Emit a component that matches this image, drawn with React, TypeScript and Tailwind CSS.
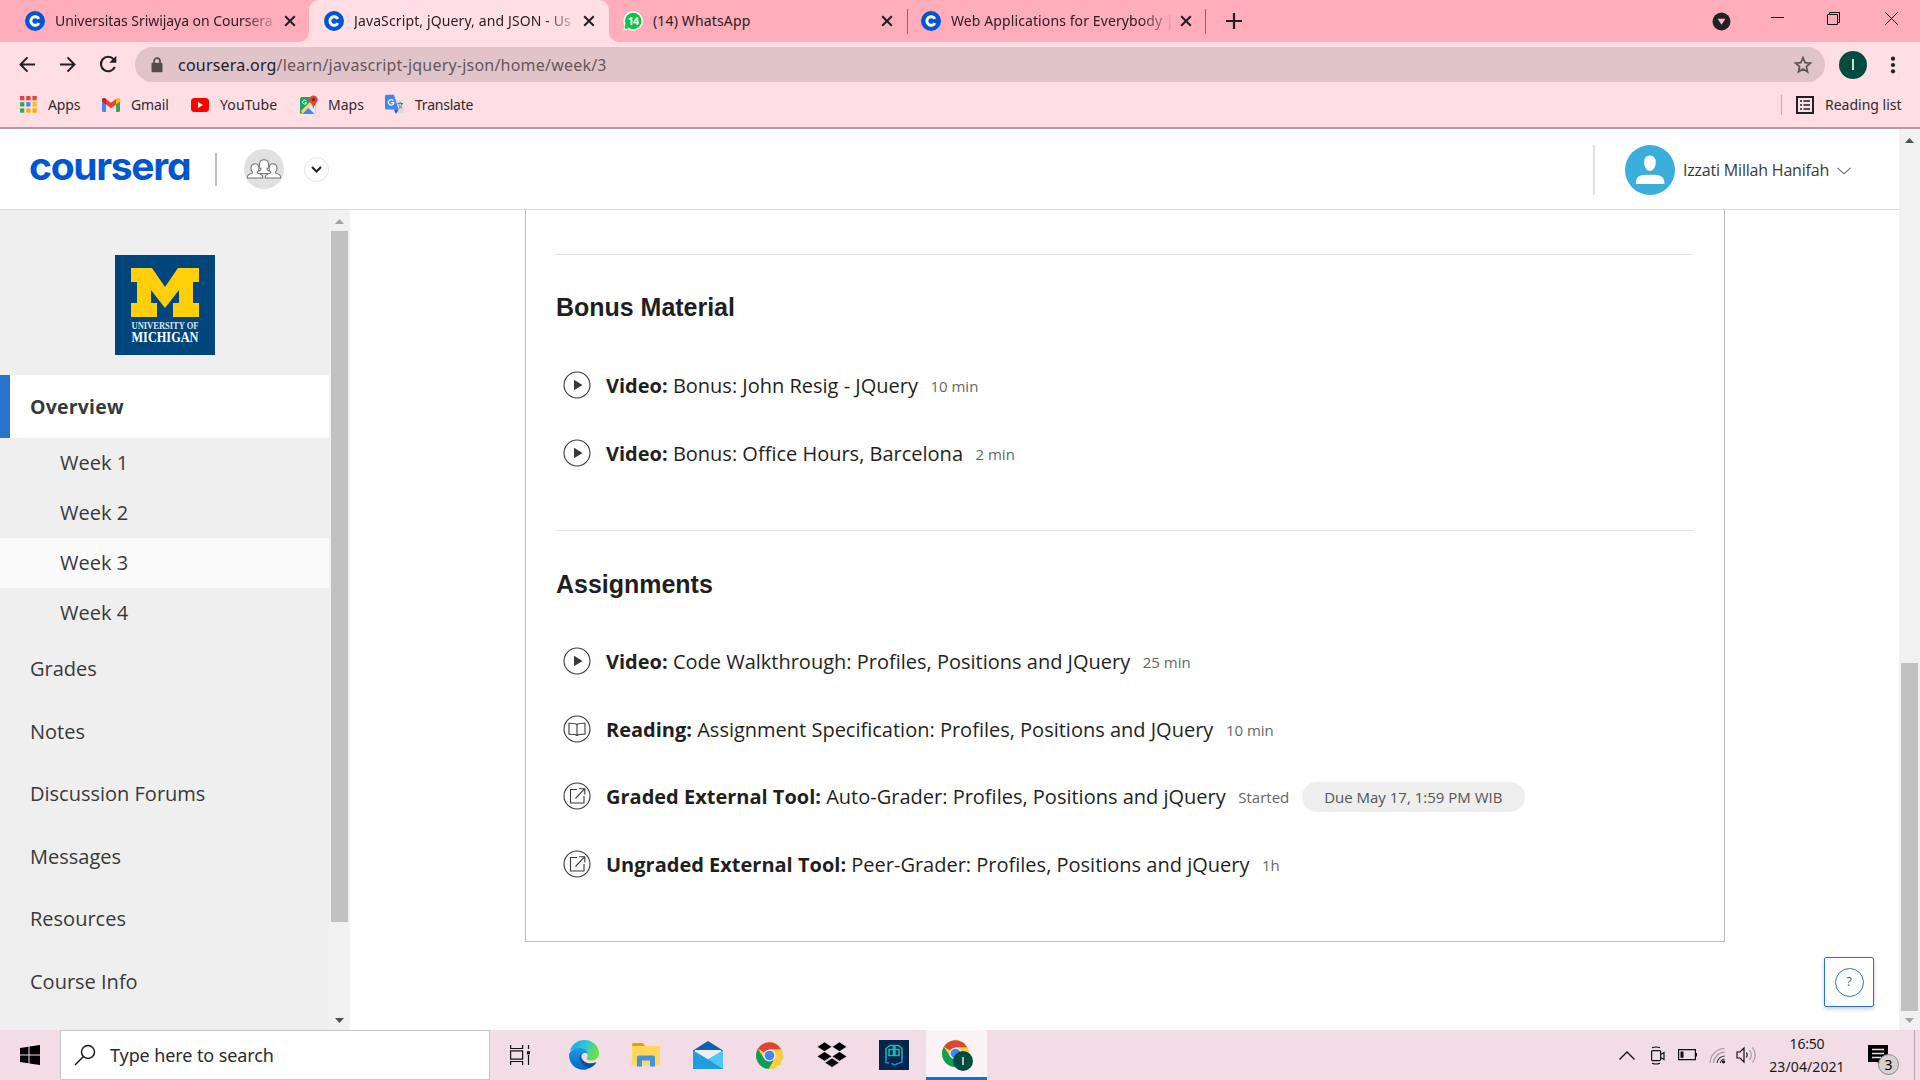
import React from "react";

const ui = "font-['Noto_Sans',sans-serif]";
const os = "font-['Open_Sans',sans-serif]";

function CourseraIcon() {
  return (
    <svg width="20" height="20" viewBox="0 0 20 20" className="shrink-0">
      <circle cx="10" cy="10" r="10" fill="#0056d2" />
      <path d="M13.9 12.1a4.3 4.3 0 1 1 0-4.2" fill="none" stroke="#fff" strokeWidth="2.9" />
    </svg>
  );
}

function WhatsAppIcon() {
  return (
    <svg width="20" height="20" viewBox="0 0 20 20" className="shrink-0">
      <path d="M10.3.3a9.5 9.7 0 1 1-5 17.9L.4 19.8l1.2-5A9.6 9.7 0 0 1 10.3.3z" fill="#fff" />
      <circle cx="10.2" cy="10" r="8.2" fill="#0cc143" />
      <path d="M2.4 12.6l-.8 5.6 4-1.2z" fill="#0cc143" />
      <text x="10.1" y="13.8" fontSize="10.5" fontWeight="700" fill="#fff" textAnchor="middle" fontFamily="Open Sans" letterSpacing="-.6">14</text>
    </svg>
  );
}

function X() {
  return (
    <svg width="12" height="12" viewBox="0 0 12 12" className="shrink-0">
      <path d="M1.2 1.2l9.6 9.6M10.8 1.2L1.2 10.8" stroke="#1d1f22" strokeWidth="2" />
    </svg>
  );
}

function Tab({ icon, title, text, track, fade }: { icon: React.ReactNode; title: string; text: string; track: string; fade?: boolean }) {
  return (
    <div className={"flex h-[41px] items-center " + text}>
      {icon}
      <div className={"ml-[10px] flex-1 overflow-hidden whitespace-nowrap text-[14px] text-[#2b2024] " + ui + " " + track + (fade ? " [mask-image:linear-gradient(to_right,#000_86%,rgba(0,0,0,.15))]" : "")}>
        {title}
      </div>
      <X />
    </div>
  );
}

function TabStrip() {
  return (
    <div className="flex h-[42px] bg-[#ffacbb]">
      <Tab icon={<CourseraIcon />} title="Universitas Sriwijaya on Coursera" text="w-[309px] pl-[25px] pr-[13px] [&>svg:last-child]:ml-[9px]" track="tracking-[-0.05px]" fade />
      <div className="relative w-[300px]">
        <div className="h-[42px] rounded-t-[10px] bg-[#ffdee4]">
          <Tab icon={<CourseraIcon />} title="JavaScript, jQuery, and JSON - Us" text="w-[300px] pl-[15px] pr-[14px] [&>svg:last-child]:ml-[8px]" track="tracking-[0.12px]" fade />
        </div>
        <svg className="absolute bottom-0 left-[-10px]" width="10" height="10"><path d="M0 10A10 10 0 0 0 10 0V10z" fill="#ffdee4" /></svg>
        <svg className="absolute bottom-0 right-[-10px]" width="10" height="10"><path d="M10 10A10 10 0 0 1 0 0V10z" fill="#ffdee4" /></svg>
      </div>
      <Tab icon={<WhatsAppIcon />} title="(14) WhatsApp" text="w-[298px] pl-[14px] pr-[14px]" track="tracking-[0.15px]" />
      <div className="mt-[9px] h-[25px] w-px bg-[#96646e]" />
      <Tab icon={<CourseraIcon />} title="Web Applications for Everybody |" text="w-[297px] pl-[13px] pr-[13px] [&>svg:last-child]:ml-[9px]" track="tracking-[0.1px]" fade />
      <div className="mt-[9px] h-[25px] w-px bg-[#96646e]" />
      <svg className="ml-[20px] mt-[13px]" width="16" height="16"><path d="M8 0v16M0 8h16" stroke="#1d1f22" strokeWidth="2.2" /></svg>
      <div className="flex-1" />
      <svg className="mr-[40px] mt-[12px]" width="19" height="19"><circle cx="9.5" cy="9.5" r="9" fill="#202124" /><path d="M5.6 6.8h7.8l-3.9 6z" fill="#ffb9c5" /></svg>
      <svg className="mr-[43px] mt-[12px]" width="13" height="13"><path d="M0 5.5h13" stroke="#111" /></svg>
      <svg className="mr-[45px] mt-[12px]" width="13" height="13"><path d="M.5 2.5h10v10H.5zM2.5 2.5v-2h10v10h-2" fill="none" stroke="#111" /></svg>
      <svg className="mr-[22px] mt-[12px]" width="13" height="13"><path d="M.3.3l12.4 12.4M12.7.3L.3 12.7" stroke="#111" /></svg>
    </div>
  );
}

function Toolbar() {
  return (
    <div className="flex h-[45px] items-center bg-[#ffdee4]">
      <svg className="ml-[19px]" width="17" height="17" viewBox="0 0 18 18"><path d="M17 9H2M9 1.5L1.6 9 9 16.5" fill="none" stroke="#202124" strokeWidth="2.1" /></svg>
      <svg className="ml-[23px]" width="17" height="17" viewBox="0 0 18 18"><path d="M1 9h15M9 1.5L16.4 9 9 16.5" fill="none" stroke="#202124" strokeWidth="2.1" /></svg>
      <svg className="ml-[23px]" width="19" height="19" viewBox="0 0 20 20"><path d="M16.6 12.6a7.6 7.6 0 1 1-1.2-8.1L17 6.2" fill="none" stroke="#202124" strokeWidth="2.2" /><path d="M18.2.8v7.4h-7.4z" fill="#202124" /></svg>
      <div className="ml-[17px] flex h-[35px] w-[1690px] items-center rounded-full bg-[#e1c4ca] pl-[16px] pr-[12px]">
        <svg width="12" height="16" viewBox="0 0 12 16"><path d="M3 6V4.2a3 3 0 0 1 6 0V6" fill="none" stroke="#55494d" strokeWidth="1.7" /><rect x=".5" y="5.7" width="11" height="9.6" rx="1.2" fill="#55494d" /></svg>
        <div className={"ml-[15px] flex-1 whitespace-nowrap text-[16px] text-[#66565b] tracking-[0.21px] " + ui}>
          <span className="text-[#202124]">coursera.org</span>/learn/javascript-jquery-json/home/week/3
        </div>
        <svg width="20" height="20" viewBox="0 0 24 24"><path d="M12 3.2l2.5 6 6.4.5-4.9 4.2 1.5 6.3-5.5-3.4-5.5 3.4L8 13.9 3.1 9.7l6.4-.5z" fill="none" stroke="#5f5559" strokeWidth="2.1" /></svg>
      </div>
      <div className="ml-[14px] flex h-[28px] w-[28px] items-center justify-center rounded-full bg-[#004d40]">
        <div className="h-[11px] w-[1.5px] bg-[#cfe0dc]" />
      </div>
      <svg className="ml-[22px]" width="8" height="18"><circle cx="4" cy="2.7" r="2.1" fill="#202124" /><circle cx="4" cy="9" r="2.1" fill="#202124" /><circle cx="4" cy="15.3" r="2.1" fill="#202124" /></svg>
    </div>
  );
}

function Bookmarks() {
  const dots = ["#ea4335", "#ea4335", "#ea4335", "#34a853", "#4285f4", "#fbbc04", "#34a853", "#fbab04", "#fbab04"];
  const label = "whitespace-nowrap text-[14px] text-[#2f2a2d] " + ui;
  return (
    <div className="flex h-[42px] items-center border-b-2 border-[#b39aa1] bg-[#ffdee4] pb-[5px] pl-[20px]">
      <svg width="17" height="17" viewBox="0 0 17 17">
        {dots.map((c, i) => (<rect key={i} x={(i % 3) * 6.2} y={Math.floor(i / 3) * 6.2} width="4.3" height="4.3" fill={c} />))}
      </svg>
      <div className={"ml-[11px] w-[54px] tracking-[-0.1px] " + label}>Apps</div>
      <svg width="18" height="14" viewBox="0 0 18 14">
        <path d="M0 1.5V12.8A1.2 1.2 0 0 0 1.2 14H4V4z" fill="#4285f4" /><path d="M18 1.5V12.8a1.2 1.2 0 0 1-1.2 1.2H14V4z" fill="#34a853" />
        <path d="M14 .8V6.5L18 3.4V2c0-1.8-1.7-2.5-3-1.7z" fill="#fbbc04" /><path d="M4 .8V6.5L0 3.4V2C0 .2 1.7-.5 3 .3z" fill="#c5221f" /><path d="M4 1v5.5l5 3.8 5-3.8V1L9 4.8z" fill="#ea4335" />
      </svg>
      <div className={"ml-[11px] w-[60px] tracking-[-0.1px] " + label}>Gmail</div>
      <svg width="18" height="14" viewBox="0 0 18 14"><rect width="18" height="14" rx="3.5" fill="#f00" /><path d="M7 4l5 3-5 3z" fill="#fff" /></svg>
      <div className={"ml-[11px] w-[80px] tracking-[0.1px] " + label}>YouTube</div>
      <svg width="18" height="20" viewBox="0 0 18 20">
        <rect x="0" y="2" width="15.5" height="17" rx="1.5" fill="#1fa463" /><path d="M1 19L12 7l3.5 4v8z" fill="#e8eaed" /><path d="M2 19l6-6.5 6.5 6.5z" fill="#4285f4" /><path d="M1 16L12 5l2 2L3 18.5z" fill="#fdd663" />
        <path d="M13.5.4a4.2 4.2 0 0 1 4.2 4.2c0 3.2-3.4 4.4-4.2 9.4-.8-5-4.2-6.2-4.2-9.4A4.2 4.2 0 0 1 13.5.4z" fill="#ea4335" /><circle cx="13.5" cy="4.7" r="1.6" fill="#7b2018" /><path d="M6.3 6a2 2 0 1 0 .3 1.6H4.8" fill="none" stroke="#fff" strokeWidth=".9" />
      </svg>
      <div className={"ml-[10px] w-[57px] tracking-[0px] " + label}>Maps</div>
      <svg width="20" height="21" viewBox="0 0 20 21">
        <rect x="8" y="6" width="10.5" height="13" rx="1" fill="#dadce0" /><path d="M0 2.2A1.5 1.5 0 0 1 1.5.7H9l4.5 14.8H1.5A1.5 1.5 0 0 1 0 14z" fill="#4285f4" /><path d="M9 15.5h4.5L11 20z" fill="#3057c5" />
        <path d="M8.3 6.8a2.7 2.7 0 1 0 .5 1.9H6.2" fill="none" stroke="#fff" strokeWidth="1.3" /><path d="M12.5 9.5h5.5M15.2 8v1.5M17 9.7c-.5 2.3-2 4-3.5 5M13.7 10.5c.7 1.8 2 3 3.5 4" fill="none" stroke="#667985" strokeWidth="1" />
      </svg>
      <div className={"ml-[10px] flex-1 tracking-[-0.22px] " + label}>Translate</div>
      <div className="h-[20px] w-px bg-[#c9aab1]" />
      <svg className="ml-[14px]" width="18" height="18" viewBox="0 0 18 18"><rect x="1" y="1" width="16" height="16" fill="none" stroke="#202124" strokeWidth="2" /><path d="M4 5h2M4 9h2M4 13h2M7.5 5H14M7.5 9H14M7.5 13H14" stroke="#202124" strokeWidth="1.7" /></svg>
      <div className={"ml-[11px] w-[95px] tracking-[0px] " + label}>Reading list</div>
    </div>
  );
}

function Header() {
  return (
    <div className="flex h-[81px] w-[1899px] items-center border-b border-[#dcdcdc] bg-white">
      <div className="mb-[6px] ml-[29px] w-[186px] whitespace-nowrap font-['Inter',sans-serif] text-[39px] font-bold leading-[40px] tracking-[-1.3px] text-[#0056d2] [font-feature-settings:'cv11']">coursera</div>
      <div className="h-[33px] w-[2px] bg-[#bdbdbd]" />
      <div className="ml-[27px] flex h-[40px] w-[40px] items-center justify-center rounded-full bg-[#e1e1e1]">
        <svg width="36" height="20" viewBox="0 0 36 20" fill="#fff" stroke="#757575" strokeWidth="1.1">
          <path d="M10 14.5c.3-2.5 2.500-2.500 4.500-3.200l.5-1.300C12.300 8 12.500.7 18 .7s5.700 7.300 3 9.300l.5 1.300c2 .7 4.200.7 4.500 3.200z" />
          <path d="M1.300 19c0-3 1.400-3.600 4.900-4.700l.4-1.200C4.200 11 4.200 4.800 9 4.800s4.800 6.200 2.400 8.300l.4 1.200c3.500 1.100 4.900 1.700 4.900 4.700z" />
          <path d="M19.300 19c0-3 1.400-3.600 4.900-4.700l.4-1.200c-2.400-2.100-2.400-8.300 2.400-8.300s4.800 6.200 2.400 8.300l.4 1.200c3.500 1.100 4.900 1.700 4.900 4.700z" />
        </svg>
      </div>
      <div className="ml-[20px] mt-px flex h-[25px] w-[25px] items-center justify-center rounded-full border border-[#e1e1e1]">
        <svg width="11" height="7"><path d="M1 1l4.500 4.500L10 1" fill="none" stroke="#1f1f1f" strokeWidth="2" /></svg>
      </div>
      <div className="flex-1" />
      <div className="mt-[2px] h-[50px] w-[2px] bg-[#e1e1e1]" />
      <svg className="ml-[30px] mt-[2px]" width="50" height="50"><circle cx="25" cy="25" r="25" fill="#3caedb" /><path d="M25 10.500c9 0 6.500 15.500 0 15.500s-9-15.500 0-15.500zM10.800 39c0-9 5-9.300 14.200-9.300S39.500 30 39.500 39z" fill="#fff" /></svg>
      <div className={"ml-[8px] mt-[2px] w-[154px] whitespace-nowrap text-[16px] text-[#373a3c] tracking-[-0.2px] " + os}>Izzati Millah Hanifah</div>
      <svg className="mr-[48px] mt-[4px]" width="14" height="8"><path d="M.5.8l6.500 6 6.500-6" fill="none" stroke="#666" strokeWidth="1.100" /></svg>
    </div>
  );
}

function Michigan() {
  return (
    <div className="ml-[115px] mt-[45px] h-[100px] w-[100px] bg-[#00457c]">
      <svg width="100" height="100">
        <path d="M16 13h21l13 19 13-19h21v14h-6v21h6v14H58V48h6V35L50 53 36 35v13h6v14H16V48h6V27h-6z" fill="#ffcf0a" />
        <text x="50" y="74" textAnchor="middle" textLength="67" lengthAdjust="spacingAndGlyphs" fontFamily="Liberation Serif" fontSize="9.5" fontWeight="700" fill="#dfe8ef">UNIVERSITY OF</text>
        <text x="50" y="86.500" textAnchor="middle" textLength="67" lengthAdjust="spacingAndGlyphs" fontFamily="Liberation Serif" fontSize="14.5" fontWeight="700" fill="#fff">MICHIGAN</text>
      </svg>
    </div>
  );
}

function Triangle({ up, dark }: { up?: boolean; dark?: boolean }) {
  return (
    <svg width="9" height="5"><path d={up ? "M0 5h9L4.500 0z" : "M0 0h9L4.500 5z"} fill={dark ? "#505050" : "#a3a3a3"} /></svg>
  );
}

function Sidebar() {
  return (
    <div className={"flex h-[820px] w-[350px] bg-[#efefef] text-[#373a3c] " + os}>
      <div className="w-[329px] overflow-hidden text-[20px]">
        <Michigan />
        <div className="mt-[20px] flex h-[63px] items-center border-l-[10px] border-[#2a73cc] bg-white pl-[20px] text-[19.5px] font-bold tracking-[0.2px]">Overview</div>
        {["Week 1", "Week 2", "Week 3", "Week 4"].map((w) => (
          <div key={w} className={"flex h-[50px] items-center pl-[60px] " + (w === "Week 3" ? "bg-[#fafafa]" : "")}>{w}</div>
        ))}
        {["Grades", "Notes", "Discussion Forums", "Messages", "Resources", "Course Info"].map((w) => (
          <div key={w} className="flex h-[62.5px] items-center pl-[30px]">{w}</div>
        ))}
      </div>
      <div className="flex h-[820px] w-[21px] flex-col items-center bg-[#f1f1f1]">
        <div className="flex h-[21px] items-center pt-[2px]"><Triangle up /></div>
        <div className="h-[691px] w-[17px] bg-[#c1c1c1]" />
        <div className="flex-1" />
        <div className="flex h-[21px] items-center pt-px"><Triangle dark /></div>
      </div>
    </div>
  );
}

function RowIcon({ kind }: { kind: string }) {
  return (
    <svg width="28" height="28" viewBox="0 0 28 28" fill="none" stroke="#373a45" strokeWidth="1.1" className="mb-[2px] shrink-0">
      <circle cx="14" cy="14" r="13" />
      {kind === "video" && <path d="M11 8.700v10.600l8.500-5.300z" fill="#373a45" stroke="none" />}
      {kind === "reading" && <path d="M14 9.600c-1.500-1.300-4-1.500-8-1.400v11c4-.1 6.500 0 8 1.300 1.500-1.300 4-1.400 8-1.300v-11c-4-.1-6.500.1-8 1.400v10.900" />}
      {kind === "tool" && <path d="M14 7.500H7.500v13.500H21v-7M16 6.700h5.800v5.800M21.800 6.700L12.500 16.500" />}
    </svg>
  );
}

function Row({ kind, type, title, meta, due }: { kind: string; type: string; title: string; meta: string; due?: string }) {
  return (
    <div className="flex h-[67.6px] items-center pl-[7px]">
      <RowIcon kind={kind} />
      <div className="ml-[15px] whitespace-nowrap text-[20px] text-[#1f1f1f]">
        <span className="font-bold">{type}:</span> {title}
      </div>
      <div className="ml-[12.5px] text-[15px] text-[#666]">{meta}</div>
      {due && <div className="ml-[12.5px] flex h-[30px] w-[223px] items-center justify-center rounded-full bg-[#eee] text-[15px] text-[#555]">{due}</div>}
    </div>
  );
}

function Heading({ children, offset }: { children: React.ReactNode; offset: string }) {
  return <div className={"flex h-[97.5px] items-center font-['Liberation_Sans',sans-serif] text-[25px] font-bold tracking-[-0.02px] text-[#1f1f1f] " + offset}>{children}</div>;
}

function Main() {
  return (
    <div className={"flex h-[820px] flex-1 bg-white pl-[175px] " + os}>
      <div className="h-[732px] w-[1200px] border border-t-0 border-[#bdbdbd] pl-[30px] pr-[31px] pt-[44px]">
        <div className="h-[276px] border-t border-[#e1e1e1]">
          <Heading offset="pt-[8px]">Bonus Material</Heading>
          <Row kind="video" type="Video" title="Bonus: John Resig - JQuery" meta="10 min" />
          <Row kind="video" type="Video" title="Bonus: Office Hours, Barcelona" meta="2 min" />
        </div>
        <div className="border-t border-[#e1e1e1]">
          <Heading offset="pt-[9.5px]">Assignments</Heading>
          <Row kind="video" type="Video" title="Code Walkthrough: Profiles, Positions and JQuery" meta="25 min" />
          <Row kind="reading" type="Reading" title="Assignment Specification: Profiles, Positions and JQuery" meta="10 min" />
          <Row kind="tool" type="Graded External Tool" title="Auto-Grader: Profiles, Positions and jQuery" meta="Started" due="Due May 17, 1:59 PM WIB" />
          <Row kind="tool" type="Ungraded External Tool" title="Peer-Grader: Profiles, Positions and jQuery" meta="1h" />
        </div>
      </div>
      <div className="ml-[99px] mt-[747px] flex h-[50px] w-[50px] items-center justify-center rounded-[2px] border border-[#2a73cc] shadow-[0_2px_4px_rgba(0,0,0,.2)]">
        <div className="flex h-[29px] w-[29px] items-center justify-center rounded-full border border-[#2a73cc] text-[13px] text-[#2a73cc]">?</div>
      </div>
    </div>
  );
}

function PageScrollbar() {
  return (
    <div className="flex h-[901px] w-[21px] flex-col items-center bg-[#f1f1f1]">
      <div className="flex h-[21px] items-center pt-[2px]"><Triangle up dark /></div>
      <div className="h-[513px]" />
      <div className="h-[348px] w-[17px] bg-[#c1c1c1]" />
      <div className="flex h-[19px] items-center"><Triangle /></div>
    </div>
  );
}

function ChromeLogo({ size }: { size: number }) {
  return (
    <svg width={size} height={size} viewBox="0 0 28 28">
      <circle cx="14" cy="14" r="14" fill="#ffcd40" />
      <path d="M14 14L1.900 7A14 14 0 0 1 26.100 7.700H14z" fill="#db4437" />
      <path d="M1.900 7A14 14 0 0 0 13.300 28L19.500 17.200 8.500 17.200z" fill="#0f9d58" />
      <path d="M14 7.700h12.100A14 14 0 0 1 13.300 28L19.500 17.100z" fill="#ffcd40" />
      <circle cx="14" cy="14" r="6.300" fill="#f1f1f1" /><circle cx="14" cy="14" r="5" fill="#4285f4" />
    </svg>
  );
}

function Taskbar() {
  return (
    <div className={"flex h-[50px] items-stretch bg-[#f2dde6] " + ui}>
      <div className="flex w-[60px] items-center justify-center">
        <svg width="20" height="20"><path d="M0 3l8.500-1.200v7.700H0zM9.500 1.600L20 0v9.500H9.500zM0 10.500h8.500v7.700L0 17zM9.500 10.500H20V20L9.500 18.400z" fill="#000" /></svg>
      </div>
      <div className="flex w-[430px] items-center border border-[#c6c6c6] bg-white pl-[13px]">
        <svg width="22" height="22"><circle cx="14" cy="8" r="6.500" fill="none" stroke="#111" strokeWidth="1.400" /><path d="M9.500 12.500L1 21" stroke="#111" strokeWidth="1.500" /></svg>
        <div className="ml-[14px] text-[18px] tracking-[-0.1px] text-[#2b2b2b]">Type here to search</div>
      </div>
      <div className="flex w-[60px] items-center justify-center">
        <svg width="20" height="20" fill="none" stroke="#111" strokeWidth="1.200"><path d="M.6 0v3.500h12V0M.6 20v-3.500h12V20M.6 5.800h12v8.400H.6zM18.500 0v4M18.500 10v10" /><rect x="17.500" y="6.800" width="2" height="2" fill="#111" /></svg>
      </div>
      <div className="ml-[2px] flex w-[64px] items-center justify-center">
        <svg width="30" height="30" viewBox="0 0 30 30">
          <defs>
            <linearGradient id="e1" x1="0" y1="0" x2="1" y2=".4"><stop offset="0" stopColor="#1b9de2" /><stop offset=".5" stopColor="#2fc2df" /><stop offset="1" stopColor="#6be04a" /></linearGradient>
            <linearGradient id="e2" x1="0" y1="0" x2="0" y2="1"><stop offset="0" stopColor="#1b9de2" /><stop offset="1" stopColor="#0a62c8" /></linearGradient>
          </defs>
          <path d="M1 11C3 4 8.500 0 15.300 0 24 0 30 6.500 30 13c0 5-3.500 7.500-7.500 7.500-4 0-5.500-1.500-4.500-3 2-3.500 0-7-4-8C9 8 4 9 1 11z" fill="url(#e1)" />
          <path d="M0 15C.5 11 5 8 10 8c4.500 0 9 2.500 9 7-.5-2-3-3-5-1.500-4 3-1.500 12 5.500 14.700-1.500 1-3 1.600-5 1.600C6 29.800 0 23 0 15z" fill="url(#e2)" />
          <path d="M11.500 14C9 18 12 26 19.500 28.500c3.500-1 6.500-3.500 8-6.500-7 3-15 1-16-8z" fill="#0c4fa0" />
        </svg>
      </div>
      <div className="flex w-[60px] items-center justify-center">
        <svg width="28" height="24"><path d="M0 1.500Q0 0 1.500 0H11l2.500 3.500H0z" fill="#e0a000" /><rect y="3" width="28" height="19.500" rx="1" fill="#ffd75e" /><path d="M5 23.500V14.500Q5 12.500 7 12.500H21Q23 12.500 23 14.500V23.500H18V17.500H10V23.500z" fill="#3f95d8" /></svg>
      </div>
      <div className="ml-[2px] flex w-[60px] items-center justify-center">
        <svg width="30" height="28"><path d="M0 9.500L15 0l15 9.500V14H0z" fill="#0f5fb4" /><path d="M2 9h26v10H2z" fill="#eee" /><path d="M0 9.500L15 18.500 30 9.500V28H0z" fill="#2fb0ea" /><path d="M30 9.500V28L15 18.500z" fill="#50c8f5" /><path d="M0 9.500V28h30L15 18.500z" fill="#209de0" /></svg>
      </div>
      <div className="ml-px flex w-[60px] items-center justify-center"><ChromeLogo size={27} /></div>
      <div className="ml-[3px] flex w-[60px] items-center justify-center">
        <svg width="30" height="26" viewBox="0 0 30 26"><path d="M7.500 0L15 4.800 7.500 9.600 0 4.800zM22.500 0L30 4.800 22.500 9.600 15 4.800zM7.500 9.600L15 14.400 7.500 19.200 0 14.400zM22.500 9.600L30 14.400 22.500 19.200 15 14.400zM15 16l7.300 4.700L15 25.400 7.700 20.700z" fill="#000" stroke="#f2dde6" strokeWidth=".7" /></svg>
      </div>
      <div className="ml-[2px] flex w-[60px] items-center justify-center">
        <svg width="30" height="30" fill="none" strokeWidth="1.500">
          <rect width="30" height="30" fill="#05254a" />
          <path d="M7 19V8.500L11 5.500h3.500V15.500H10V9.500h4.500M23 19V8.500L19.500 5.500H16V15.500h4V9.500h-4" stroke="#18b8b8" />
          <path d="M7 18v4.500l3 .5M12.500 23.500l3 1.500 7.500-3V16" stroke="#1a8fd0" />
        </svg>
      </div>
      <div className="ml-[2px] flex w-[61px] items-center justify-center border-b-[3px] border-[#0078d7] bg-[#fbf2f5]">
        <div className="relative ml-[2px] mt-[3px] h-[31px] w-[31px]">
          <ChromeLogo size={27} />
          <div className="absolute bottom-0 right-0 flex h-[20px] w-[20px] items-center justify-center rounded-full bg-[#004d40]"><div className="h-[8px] w-[1.5px] bg-[#a9c6c0]" /></div>
        </div>
      </div>
      <div className="flex-1" />
      <div className="flex w-[295px] items-center">
        <svg width="16" height="9" className="-ml-[6px]"><path d="M.5 8.500L8 1l7.500 7.500" fill="none" stroke="#111" strokeWidth="1.400" /></svg>
        <svg className="ml-[15px]" width="17" height="19" fill="none" stroke="#111" strokeWidth="1.200"><rect x="1.600" y="4.600" width="9" height="10" rx="1" /><path d="M10.600 8.500l3.400-2v7l-3.400-2M2 1.800Q6 .2 10 1.800M2 17.200Q6 18.800 10 17.200" /></svg>
        <svg className="ml-[11px]" width="20" height="12" fill="none" stroke="#111" strokeWidth="1.200"><path d="M.6.600h16.800v10H.6z" /><path d="M2.500 2.500h3v6.200h-3zM17.800 4h1.200v3.500h-1.200z" fill="#111" stroke="none" /></svg>
        <svg className="ml-[11px]" width="17" height="17" fill="none" strokeWidth="1.200"><path d="M1 16A15 15 0 0 1 15.500 1.500M4.500 16A11.500 11.500 0 0 1 15.500 5.200" stroke="#a8959c" /><path d="M8 16a8 8 0 0 1 7.500-7M11.300 16a5 5 0 0 1 4.200-4" stroke="#333" /><circle cx="14.500" cy="14.800" r="1.600" fill="#111" /></svg>
        <svg className="ml-[10px]" width="21" height="18" fill="none" strokeWidth="1.200"><path d="M1 6h3l4-4v14l-4-4H1zM10.500 6.500q1.500 2.500 0 5" stroke="#111" /><path d="M13.500 4q3.500 5 0 10M16.500 1.500q5.500 7.500 0 15" stroke="#a8959c" /></svg>
        <div className="ml-[10px] w-[80px] whitespace-nowrap text-center text-[14px] leading-[23px] text-[#1a1a1a]"><div className="tracking-[-0.2px]">16:50</div><div className="tracking-[0.1px]">23/04/2021</div></div>
        <div className="relative ml-[21px] mt-[10px] h-[30px] w-[31px]">
          <svg width="22" height="22"><path d="M0 0h20v17h-6v4l-5-4H0z" fill="#000" /><path d="M4 4.500h12M4 8.500h12M4 12.500h9" stroke="#f2dde6" strokeWidth="1.300" /></svg>
          <div className="absolute right-0 top-[9px] flex h-[21px] w-[21px] items-center justify-center rounded-full border border-[#888] bg-[#d6d0d3] text-[14px] leading-none text-black">3</div>
        </div>
        <div className="ml-auto mr-[5px] h-[50px] w-px bg-[#bba9b1]" />
      </div>
    </div>
  );
}

export default function App() {
  return (
    <div className="h-[1080px] w-[1920px] overflow-hidden bg-white">
      <TabStrip />
      <Toolbar />
      <Bookmarks />
      <div className="flex h-[901px]">
        <div className="w-[1899px]">
          <Header />
          <div className="flex"><Sidebar /><Main /></div>
        </div>
        <PageScrollbar />
      </div>
      <Taskbar />
    </div>
  );
}
